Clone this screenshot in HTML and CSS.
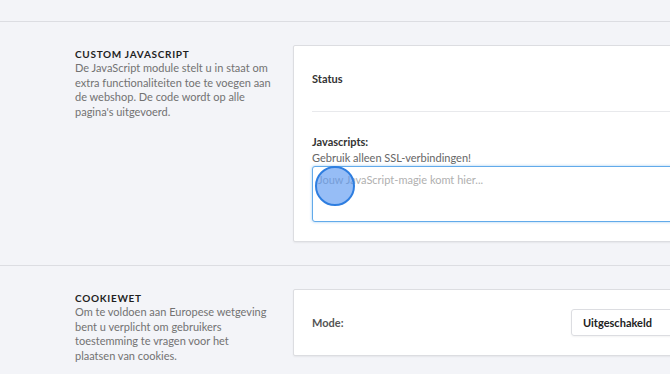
FILE: index.html
```html
<!DOCTYPE html>
<html lang="nl">
<head>
  <meta charset="UTF-8" />
  <meta name="viewport" content="width=device-width, initial-scale=1.0"/>
  <title>Webshop - Instellingen</title>
  <link rel="stylesheet" href="styles.css">
</head>
<body>
  <div class="topbar"></div>

  <div class="section">
    <div class="section-info">
      <h3>Custom JavaScript</h3>
      <p>De JavaScript module stelt u in staat om extra functionaliteiten toe te voegen aan de webshop. De code wordt op alle pagina's uitgevoerd.</p>
    </div>
    <div class="card">
      <div class="card-row">
        <span class="row-label">Status</span>
      </div>
      <div class="card-row card-row-field">
        <label for="scripts" class="field-label">Javascripts:</label>
        <div class="field-hint">Gebruik alleen SSL-verbindingen!</div>
        <div class="textarea-wrap">
          <textarea id="scripts" placeholder="Jouw JavaScript-magie komt hier..."></textarea>
          <span class="click-dot"></span>
        </div>
      </div>
    </div>
  </div>

  <div class="section">
    <div class="section-info">
      <h3>Cookiewet</h3>
      <p>Om te voldoen aan Europese wetgeving bent u verplicht om gebruikers toestemming te vragen voor het plaatsen van cookies.</p>
    </div>
    <div class="card">
      <div class="card-row card-row-select">
        <span class="row-label muted">Mode:</span>
        <div class="select">Uitgeschakeld</div>
      </div>
    </div>
  </div>
</body>
</html>
```

FILE: styles.css
```css
body {
  font-family: 'Lato', 'Liberation Sans', sans-serif;
  background: #f3f4f8;
  margin: 0;
  padding: 0;
  overflow: hidden;
  color: #333;
}

.topbar {
  height: 21px;
  border-bottom: 1px solid #dcdde2;
}

.section {
  display: flex;
  align-items: flex-start;
  gap: 22px;
  padding: 23px 0 23px 75px;
  border-bottom: 1px solid #dcdde2;
}

.section-info {
  width: 196px;
  flex: none;
  padding-top: 3px;
}

.section-info h3 {
  margin: 0 0 1px;
  font-size: 10px;
  line-height: 12px;
  font-weight: 700;
  letter-spacing: 0.7px;
  text-transform: uppercase;
  color: #1f1f1f;
}

.section-info p {
  margin: 0;
  font-size: 11px;
  line-height: 14.5px;
  color: #727272;
}

.card {
  flex: none;
  width: 440px;
  background: #fff;
  border: 1px solid #dcdde1;
  border-radius: 2px;
  box-shadow: 0 1px 2px rgba(0,0,0,0.06);
  padding: 0 18px;
  font-size: 11px;
}

.card-row {
  padding: 24px 0;
  line-height: 17px;
}

.card-row + .card-row {
  border-top: 1px solid #e8e9ec;
}

.row-label {
  font-size: 11px;
  font-weight: 700;
  color: #333;
}

.row-label.muted {
  color: #555;
}

.card-row-field {
  padding: 22px 0 19px;
}

.field-label {
  display: block;
  font-weight: 700;
  line-height: 16px;
  color: #333;
}

.field-hint {
  line-height: 15px;
  color: #666;
}

.textarea-wrap {
  position: relative;
  margin-top: 1px;
}

textarea {
  display: block;
  width: 100%;
  box-sizing: border-box;
  height: 56px;
  padding: 6px 5px;
  font-family: inherit;
  font-size: 11px;
  border: 1px solid #62aaea;
  border-radius: 3px;
  box-shadow: 0 0 3px rgba(98,170,234,0.6);
  resize: none;
  outline: none;
}

textarea::placeholder {
  color: #b0b0b0;
}

.click-dot {
  position: absolute;
  left: 3px;
  top: 0;
  width: 36px;
  height: 36px;
  border-radius: 50%;
  background: rgba(80,145,240,0.6);
  border: 2px solid #2e7ee0;
}

.card-row-select {
  display: grid;
  grid-template-columns: 259px 150px;
  align-items: center;
  padding: 19px 0;
}

.select {
  height: 27px;
  box-sizing: border-box;
  border: 1px solid #dcdde1;
  border-radius: 3px;
  box-shadow: 0 1px 2px rgba(0,0,0,0.05);
  padding: 0 11px;
  font-weight: 700;
  line-height: 25px;
  color: #222;
}
```
